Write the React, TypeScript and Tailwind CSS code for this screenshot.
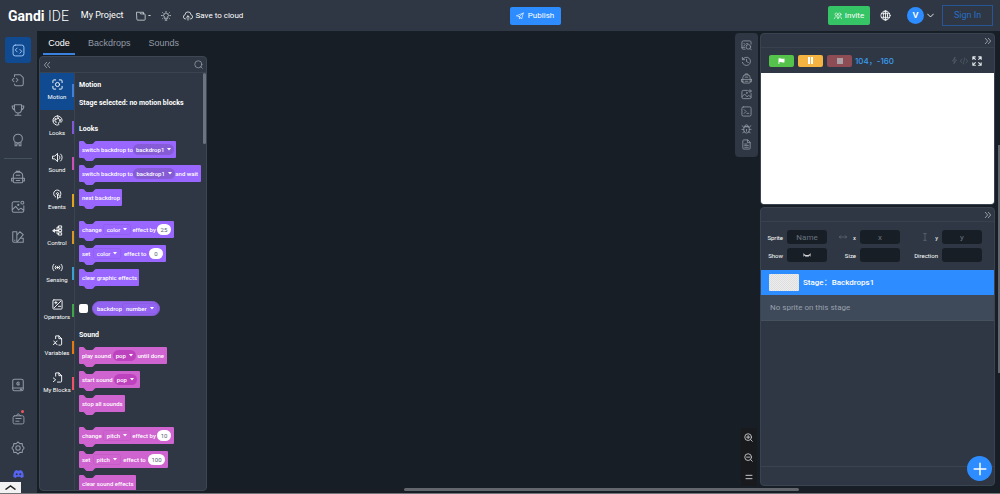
import type { ReactNode } from "react";

type IconProps = { children: ReactNode; className?: string; box?: string; width?: number };

function Icon({ children, className = "size-[14px]", box = "0 0 24 24", width = 1.8 }: IconProps) {
  return (
    <svg viewBox={box} className={"shrink-0 " + className} fill="none" stroke="currentColor" strokeWidth={width} strokeLinecap="round" strokeLinejoin="round" aria-hidden="true">
      {children}
    </svg>
  );
}

const codeFrame = (<><rect x="2" y="2" width="20" height="20" rx="4" /><path d="M9.500 7.500 6 11l3.500 3.500M14.500 10 18 13.500 14.500 17" /></>);
const fileCode = (<><path d="M6 6V3h10l5 5v11a3 3 0 0 1-3 3H9a3 3 0 0 1-3-3" /><path d="M5 9 2 12l3 3M9 9l3 3-3 3" /></>);
const trophy = (<><path d="M6 3h12v8a6 6 0 0 1-12 0zM6 5H2c0 4 1 6 4.500 7M18 5h4c0 4-1 6-4.500 7M12 17v4M7 21h10" /></>);
const medal = (<><circle cx="12" cy="9.500" r="7.500" /><path d="M7 16v6h3v-3.500h4V22h3v-6" /></>);
const backpack = (<><path d="M4 20V10a6 6 0 0 1 6-6h4a6 6 0 0 1 6 6v10a2 2 0 0 1-2 2H6a2 2 0 0 1-2-2zM9 4V2h6v2M1 14h22M1 14v5h3M23 14v5h-3M9 9h6M9 18h6" /></>);
const picture = (<><path d="M14 3H5a3 3 0 0 0-3 3v12a3 3 0 0 0 3 3h14a3 3 0 0 0 3-3v-8M2 17l6-6 5 6 4-3 5 4" /><circle cx="19.500" cy="4.500" r="2.500" /><circle cx="12.500" cy="8.500" r="1" /></>);
const swatches = (<><path d="M3 3h7v18H5a2 2 0 0 1-2-2zM10 9l5-6 6 5L10 21h11v-7h-5" /><path d="M6.500 17v1" /></>);
const keyBook = (<><rect x="3" y="2" width="18" height="20" rx="3" /><path d="M3 17h18M14 7.500a2.500 2.500 0 1 0 0 4V10h-1.500M16 19.500h2" /></>);
const notice = (<><rect x="2" y="7" width="20" height="15" rx="3" /><path d="m8 7 3-4 5 4M7 12h10M7 17h6" /></>);
const gear = (<><path d="m12 1.500 3 3 4.300-.3.300 4.300 3 3.500-3 3.500-.3 4.300-4.300-.3-3 3-3-3-4.300.3-.3-4.300-3-3.500 3-3.500.3-4.300 4.300.3z" /><circle cx="12" cy="12" r="3.800" /></>);
const history = (<><path d="M4 7a9 9 0 1 1-1 7M3 3v5h5M12 7v5l4 2" /></>);
const bug = (<><path d="M6 12a4 4 0 0 1 4-4h4a4 4 0 0 1 4 4v4a6 6 0 0 1-12 0zM8 8a4 4 0 0 1 8 0M8 8h8M2 14h4M18 14h4M3 6l3 4M21 6l-3 4M4 21l3-2M20 21l-3-2M12 14v4" /></>);
const terminal = (<><rect x="2" y="2" width="20" height="20" rx="3" /><path d="m7 8 4 4-4 4M13 16h4" /></>);
const doc = (<><path d="M14 2H6a2 2 0 0 0-2 2v16a2 2 0 0 0 2 2h12a2 2 0 0 0 2-2V8zM14 2v6h6M8 11h5M8 14h8M8 18h8" /></>);
const replay = (<><path d="M9 20H5a3 3 0 0 1-3-3V5a3 3 0 0 1 3-3h14a3 3 0 0 1 3 3v4M2 16h6M6 7l3 3-3 3M12 8h3" /><circle cx="16" cy="15" r="5" /><path d="m19.500 18.500 3 3" /></>);
const motion = (<><circle cx="12" cy="12" r="4.500" /><path d="M2 8V4a2 2 0 0 1 2-2h4M16 2h4a2 2 0 0 1 2 2v4M22 16v4a2 2 0 0 1-2 2h-4M8 22H4a2 2 0 0 1-2-2v-4" /></>);
const palette = (<><path d="M12 2a10 10 0 1 0 2 19.800c1-.3 1-1.300.5-2.300-1-2 0-4.500 3-4.500h3c1 0 1.500-1.500 1.500-3A10 10 0 0 0 12 2zM3 13c4-2 7 1 6 4" /><circle cx="7.500" cy="9" r="1.500" /><circle cx="13" cy="7" r="1.500" /><circle cx="17" cy="11" r="1.200" /></>);
const speaker = (<><path d="M2 9h4l6-6v18l-6-6H2zM15.500 8a5 5 0 0 1 0 8M19 4.500a10 10 0 0 1 0 15" /></>);
const events = (<><path d="M8 17.500A8 8 0 1 1 18 15M12 20v-9l7 7h-4l-3 4" /><path d="M9 11a3 3 0 0 1 6 0" /></>);
const control = (<><rect x="15" y="2" width="6" height="5" /><rect x="15" y="9.500" width="6" height="5" /><rect x="15" y="17" width="6" height="5" /><path d="M15 4.500h-4v15h4M15 12H7" /><path d="M2 12l4-3v6z" fill="currentColor" /></>);
const sensing = (<><circle cx="12" cy="12" r="1.800" fill="currentColor" /><path d="M8 8.500a5 5 0 0 0 0 7M16 8.500a5 5 0 0 1 0 7M4 5a10 10 0 0 0 0 14M20 5a10 10 0 0 1 0 14" /></>);
const operators = (<><rect x="2" y="2" width="20" height="20" rx="2" /><path d="M19 5 5 19M6 8h5M8.500 5.500v5M14 16h5" /></>);
const variables = (<><path d="M8 8V2h7l6 6v12a2 2 0 0 1-2 2h-4M15 2v6h6M4 13c3 0 3 8 7 8M11 13c-4 0-4 8-8 8" /></>);
const blocks = (<><path d="M8 9V2h7l6 6v12a2 2 0 0 1-2 2h-7M15 2v6h6M3 13l5 4-5 4" /></>);

const categories = [
  { name: "Motion", icon: motion, bar: "bg-[#4280d8]" },
  { name: "Looks", icon: palette, bar: "bg-[#8058d8]" },
  { name: "Sound", icon: speaker, bar: "bg-[#cf4fb8]" },
  { name: "Events", icon: events, bar: "bg-[#e0a51c]" },
  { name: "Control", icon: control, bar: "bg-[#dc9722]" },
  { name: "Sensing", icon: sensing, bar: "bg-[#3aa0d0]" },
  { name: "Operators", icon: operators, bar: "bg-[#3fa648]" },
  { name: "Variables", icon: variables, bar: "bg-[#e5790f]" },
  { name: "My Blocks", icon: blocks, bar: "bg-[#f0526a]" },
];

type Part = string | { menu: string; oval?: boolean } | { value: string };
type Tone = "looks" | "sound";
const tones = {
  looks: { fill: "bg-[#9966ff]", text: "text-[#9966ff]", deep: "bg-[#855cd6]" },
  sound: { fill: "bg-[#cf63cf]", text: "text-[#cf63cf]", deep: "bg-[#bd42bd]" },
};

function Parts({ parts, tone }: { parts: Part[]; tone: Tone }) {
  return (
    <>
      {parts.map((part, i) => {
        if (typeof part === "string") return <span key={i}>{part}</span>;
        if ("value" in part)
          return (
            <input key={i} aria-label="Value" defaultValue={part.value} className={"h-[11px] rounded-full bg-white text-center font-normal text-[#575e75] " + (part.value.length > 2 ? "w-[17px]" : "w-[14px]")} />
          );
        return (
          <button key={i} type="button" className={"flex h-[11px] items-center gap-[3px] " + (part.oval ? "rounded-full px-[3px] " + tones[tone].deep : "rounded-[2px] border border-black/5 px-[3px]")}>
            {part.menu}
            <svg viewBox="0 0 8 5" className="w-1" fill="currentColor" aria-hidden="true"><path d="M0 0h8L4 5z" /></svg>
          </button>
        );
      })}
    </>
  );
}

function Block({ parts, tone, width }: { parts: Part[]; tone: Tone; width: string }) {
  const t = tones[tone];
  return (
    <div className={"relative mb-[7px] flex h-[17px] items-center justify-between whitespace-nowrap rounded-[1px] px-[3px] " + t.fill + " " + width}>
      <svg viewBox="0 0 14 3" className="absolute left-1 top-0 h-[3px] w-[14px] text-[#2e3743]" fill="currentColor" aria-hidden="true"><path d="M0 0C2 0 2 3 4 3h5c2 0 2-3 4-3z" /></svg>
      <svg viewBox="0 0 14 3" className={"absolute left-1 top-full h-[3px] w-[14px] " + t.text} fill="currentColor" aria-hidden="true"><path d="M0 0C2 0 2 3 4 3h5c2 0 2-3 4-3z" /></svg>
      <Parts parts={parts} tone={tone} />
    </div>
  );
}

function SideButton({ label, children }: { label: string; children: ReactNode }) {
  return (
    <button type="button" aria-label={label} className="relative flex h-[30px] w-full shrink-0 items-center justify-center text-[#8f98a5]">
      {children}
    </button>
  );
}

function Chevrons({ flip }: { flip?: boolean }) {
  return <Icon className={"size-[8px]" + (flip ? " rotate-180" : "")} width={2.4}><path d="m4 4 7 8-7 8M13 4l7 8-7 8" /></Icon>;
}

function Header() {
  return (
    <header className="grid h-[31px] shrink-0 grid-cols-[1fr_auto_1fr] items-center bg-[#2e3743] text-[9px] text-white">
      <div className="flex items-center whitespace-nowrap">
        <a href="#home" className="ml-2 font-[Roboto] text-[14px] leading-4"><b>Gandi</b> <span className="font-light">IDE</span></a>
        <span className="ml-3 font-[Roboto]">My Project</span>
        <button type="button" aria-label="File" className="ml-3 flex items-center gap-[2px] text-[#cdd2d8]">
          <Icon className="size-[10px]" width={2}><path d="M2 3h7l2 4h9a2 2 0 0 1 2 2v11a2 2 0 0 1-2 2H4a2 2 0 0 1-2-2zM11 3h7v4" /></Icon>
          <svg viewBox="0 0 8 5" className="w-[3px]" fill="currentColor" aria-hidden="true"><path d="M0 0h8L4 5z" /></svg>
        </button>
        <button type="button" aria-label="Tips" className="ml-[10px] text-[#cdd2d8]">
          <Icon className="size-[10px]" width={2}><path d="M9 18v-3a5.500 5.500 0 1 1 6 0v3zM10 22h4M12 1v1M3 11H1M23 11h-2M4 4l1 1M20 4l-1 1M4 18l1-1M20 18l-1-1" /></Icon>
        </button>
        <button type="button" className="ml-3 flex items-center gap-[3px]">
          <Icon className="size-[10px]"><path d="M7 19H6a5 5 0 0 1-1-9.900 7 7 0 0 1 14 0A5 5 0 0 1 18 19h-1M12 22V12M8.500 15l3.500-3.500 3.500 3.500" /></Icon>
          <span className="font-[Roboto] text-[8px]">Save to cloud</span>
        </button>
      </div>
      <button type="button" className="ml-[70px] flex h-[18px] w-[51px] items-center justify-center gap-1 rounded-[2px] bg-[#2d8cff] font-[Roboto] text-[8px]">
        <Icon className="size-2"><path d="M2 11 22 3l-5 18-7-7zM10 14v7l3-4M10 14 22 3" /></Icon>Publish
      </button>
      <div className="flex items-center justify-end">
        <button type="button" className="flex h-[19px] w-[42px] items-center justify-center gap-[3px] rounded-[2px] bg-[#36c566] font-[Roboto] text-[8px]">
          <Icon className="size-2"><circle cx="7" cy="7" r="4" /><circle cx="17" cy="7" r="4" /><path d="M1 20c0-8 11-8 11 0M12 20c0-8 11-8 11 0M9 11l6 6" /></Icon>Invite
        </button>
        <button type="button" aria-label="Language" className="ml-[10px]"><Icon className="size-[11px]"><circle cx="12" cy="12" r="10" /><ellipse cx="12" cy="12" rx="4.500" ry="10" /><path d="M3 8h18M3 16h18M12 2v20" /></Icon></button>
        <button type="button" aria-label="Account" className="ml-4 flex items-center gap-[3px]">
          <span className="flex size-[17px] items-center justify-center rounded-full bg-[#2d8cff] font-bold">V</span>
          <Icon className="size-[7px]" width={3}><path d="m2 7 10 10L22 7" /></Icon>
        </button>
        <button type="button" className="ml-2 mr-[7px] h-[21px] w-[51px] border border-[#285694] font-[Roboto] text-[#2a6fc4]">Sign In</button>
      </div>
    </header>
  );
}

function Sidebar() {
  return (
    <nav aria-label="Tools" className="flex w-[37px] shrink-0 flex-col items-center bg-[#2e3743] pr-px">
      <button type="button" aria-label="Code editor" className="mb-[2px] mt-[6px] flex size-[26px] shrink-0 items-center justify-center rounded-[3px] bg-[#104b92] text-[#9cc4f5]"><Icon className="size-[13px]">{codeFrame}</Icon></button>
      <SideButton label="Files"><Icon>{fileCode}</Icon></SideButton>
      <SideButton label="Trophies"><Icon>{trophy}</Icon></SideButton>
      <SideButton label="Medals"><Icon>{medal}</Icon></SideButton>
      <hr className="my-[3px] w-7 border-[#465160]" />
      <SideButton label="Backpack"><Icon>{backpack}</Icon></SideButton>
      <SideButton label="Pictures"><Icon>{picture}</Icon></SideButton>
      <SideButton label="Themes"><Icon>{swatches}</Icon></SideButton>
      <div className="flex-1" />
      <SideButton label="Guide"><Icon>{keyBook}</Icon></SideButton>
      <div className="h-[3px]" />
      <SideButton label="News"><Icon className="size-[13px]">{notice}</Icon><span className="absolute right-3 top-[7px] size-[3px] rounded-full bg-[#f4555d]" /></SideButton>
      <SideButton label="Settings"><Icon>{gear}</Icon></SideButton>
      <button type="button" aria-label="Discord" className="mb-4 mt-[7px] shrink-0 text-[#5865f2]">
        <svg viewBox="0 0 24 18" className="h-2 w-[11px]" fill="currentColor" aria-hidden="true"><path fillRule="evenodd" d="M20 1.500 15 0l-1 1.500h-4L9 0 4 1.500C1 6 0 11 .5 15.500L6 18l2-3h8l2 3 5.500-2.500C24 11 23 6 20 1.500zM8 12a2.300 2.300 0 1 1 0-4.600A2.300 2.300 0 0 1 8 12zm8 0a2.300 2.300 0 1 1 0-4.600 2.300 2.300 0 0 1 0 4.600z" /></svg>
      </button>
    </nav>
  );
}

function Flyout() {
  return (
    <div className="relative min-w-0 flex-1 overflow-hidden border-l border-[#3a4451] pl-1 font-[Roboto] text-[7px] font-bold leading-none text-white">
      <h2 className="mt-2 text-[7px] leading-[8px]">Motion</h2>
      <p className="mt-[10px] leading-[8px]">Stage selected: no motion blocks</p>
      <h2 className="mb-2 mt-[18px] text-[7px] leading-[8px]">Looks</h2>
      <div className="text-[6px] font-medium">
        <Block tone="looks" width="w-[97px]" parts={["switch backdrop to", { menu: "backdrop1", oval: true }]} />
        <Block tone="looks" width="w-[122px]" parts={["switch backdrop to", { menu: "backdrop1", oval: true }, "and wait"]} />
        <Block tone="looks" width="w-[43px]" parts={["next backdrop"]} />
        <div className="h-2" />
        <Block tone="looks" width="w-[95px]" parts={["change", { menu: "color" }, "effect by", { value: "25" }]} />
        <Block tone="looks" width="w-[87px]" parts={["set", { menu: "color" }, "effect to", { value: "0" }]} />
        <Block tone="looks" width="w-[60px]" parts={["clear graphic effects"]} />
        <div className="flex items-center pt-2">
          <input type="checkbox" aria-label="Show backdrop" className="size-[9px] appearance-none rounded-[2px] bg-white" />
          <div className="ml-1 flex h-[15px] w-[68px] items-center justify-between rounded-full border border-[#855cd6] bg-[#9263f0] px-1"><Parts tone="looks" parts={["backdrop", { menu: "number" }]} /></div>
        </div>
      </div>
      <h2 className="mb-2 mt-[15px] text-[7px] leading-[8px]">Sound</h2>
      <div className="text-[6px] font-medium">
        <Block tone="sound" width="w-[88px]" parts={["play sound", { menu: "pop", oval: true }, "until done"]} />
        <Block tone="sound" width="w-[61px]" parts={["start sound", { menu: "pop", oval: true }]} />
        <Block tone="sound" width="w-[46px]" parts={["stop all sounds"]} />
        <div className="h-2" />
        <Block tone="sound" width="w-[95px]" parts={["change", { menu: "pitch" }, "effect by", { value: "10" }]} />
        <Block tone="sound" width="w-[89px]" parts={["set", { menu: "pitch" }, "effect to", { value: "100" }]} />
        <Block tone="sound" width="w-[57px]" parts={["clear sound effects"]} />
      </div>
      <span className="absolute right-0 top-0 h-[71px] w-[3px] rounded-full bg-[#6b7480]" />
    </div>
  );
}

function Palette() {
  return (
    <section className="flex w-[170px] shrink-0 flex-col pb-[3px]">
      <div role="tablist" className="flex h-6 shrink-0 pl-[6px] text-[9px] text-[#929aa6]">
        <button role="tab" aria-selected="true" className="w-8 border-b-2 border-[#3b82e0] pt-[3px] text-white">Code</button>
        <button role="tab" aria-selected="false" className="ml-[13px] border-b-2 border-transparent pt-[3px]">Backdrops</button>
        <button role="tab" aria-selected="false" className="ml-[18px] border-b-2 border-transparent pt-[3px]">Sounds</button>
      </div>
      <div className="ml-[2px] mt-px flex min-h-0 flex-1 flex-col overflow-hidden rounded-[4px] border border-[#3d4753] bg-[#2e3743]">
        <div className="flex h-4 shrink-0 items-center justify-between border-b border-[#3a4451] px-[3px] text-[#a3abb5]">
          <button type="button" aria-label="Collapse palette"><Chevrons flip /></button>
          <button type="button" aria-label="Search blocks"><Icon className="size-[9px]"><circle cx="11.500" cy="11.500" r="9.500" /><path d="m18 18 4 4" /></Icon></button>
        </div>
        <div className="flex min-h-0 flex-1">
          <div className="grid h-[330px] w-[34px] shrink-0 grid-rows-9 text-[6px] text-white">
            {categories.map((c, i) => (
              <button key={c.name} type="button" className={"relative flex flex-col items-center justify-center gap-[3px] pb-[3px] font-[Roboto] leading-[8px] " + (i === 0 ? "bg-[#104b92]" : "")}>
                <Icon className="size-[11px]" width={2}>{c.icon}</Icon>
                <span className="whitespace-nowrap">{c.name}</span>
                <span className={"absolute right-0 top-[11px] h-[13px] w-[2px] " + c.bar} />
              </button>
            ))}
          </div>
          <Flyout />
        </div>
      </div>
    </section>
  );
}

const workspaceTools = [
  { label: "Inspect", icon: replay }, { label: "History", icon: history }, { label: "Backpack", icon: backpack },
  { label: "Pictures", icon: picture }, { label: "Terminal", icon: terminal }, { label: "Debug", icon: bug }, { label: "Document", icon: doc },
];

function ToolColumn() {
  return (
    <aside className="flex w-[23px] shrink-0 flex-col items-center justify-between pb-2 pt-[2px]">
      <div className="flex h-[124px] w-full flex-col items-center justify-around rounded-[4px] bg-[#2e3743] py-1 text-[#929aa5]">
        {workspaceTools.map((t) => <button key={t.label} type="button" aria-label={t.label}><Icon className="size-[11px]">{t.icon}</Icon></button>)}
      </div>
      <div className="ml-1 flex h-[58px] w-4 flex-col items-center justify-around bg-[#191a1d] text-[#c3c6c9]">
        <button type="button" aria-label="Zoom in"><Icon className="size-[9px]" width={2.5}><circle cx="11" cy="11" r="9" /><path d="M7 11h8M11 7v8M18 18l4 4" /></Icon></button>
        <button type="button" aria-label="Zoom out"><Icon className="size-[9px]" width={2.5}><circle cx="11" cy="11" r="9" /><path d="M7 11h8M18 18l4 4" /></Icon></button>
        <button type="button" aria-label="Reset zoom"><Icon className="size-2" width={3}><path d="M3 7h18M3 17h18" /></Icon></button>
      </div>
    </aside>
  );
}

function PanelBar({ label }: { label: string }) {
  return (
    <div className="flex h-[14px] shrink-0 items-center justify-end border-b border-[#38424e] px-[2px] text-[#aeb5be]">
      <button type="button" aria-label={label}><Chevrons /></button>
    </div>
  );
}

function Stage() {
  return (
    <section className="flex h-[172px] shrink-0 flex-col overflow-hidden rounded-[4px] border border-[#3a4451] bg-[#2e3743]">
      <PanelBar label="Collapse stage" />
      <div className="flex h-[25px] shrink-0 items-center pl-2 pr-3">
        <button type="button" aria-label="Start" className="flex h-3 w-[25px] items-center justify-center rounded-[2px] bg-[#55c24b] text-white"><svg viewBox="0 0 16 14" className="h-[6px] w-[7px]" fill="currentColor" aria-hidden="true"><path d="M1 1c4-2 6 2 14 0v9c-6 2-8-2-12 0v4H1z" /></svg></button>
        <button type="button" aria-label="Pause" className="ml-1 flex h-3 w-[25px] items-center justify-center rounded-[2px] bg-[#f5b341] text-white"><svg viewBox="0 0 14 14" className="size-[7px]" fill="currentColor" aria-hidden="true"><path d="M2 0h4v14H2zM8 0h4v14H8z" /></svg></button>
        <button type="button" aria-label="Stop" className="ml-1 flex h-3 w-[25px] items-center justify-center rounded-[2px] bg-[#8e4c54]"><span className="size-[6px] bg-[#aaa0a6]" /></button>
        <span className="ml-[3px] font-['Inter','Noto_Sans_CJK_SC',sans-serif] text-[8px] font-medium text-[#3a9df0]">104，-160</span>
        <div className="ml-auto flex items-center text-[#56606c]">
          <Icon className="size-[7px]" width={2.5}><path d="M14 1 5 14h7l-2 9 9-13h-7z" /></Icon>
          <Icon className="ml-[2px] size-2" width={2}><path d="m6 6-5 6 5 6M18 6l5 6-5 6M14 3l-4 18" /></Icon>
          <button type="button" aria-label="Full screen" className="ml-1 text-[#e2e6ea]"><Icon className="size-[10px]" width={2.6}><path d="M2 8V2h6M2 2l6 6M16 2h6v6M22 2l-6 6M22 16v6h-6M22 22l-6-6M8 22H2v-6M2 22l6-6" /></Icon></button>
        </div>
      </div>
      <div className="min-h-0 flex-1 bg-white" />
    </section>
  );
}

const field = "h-[14px] w-10 rounded-[3px] bg-[#181e26] text-center text-[8px] text-white placeholder:text-[#69727e]";
const fieldLabel = "flex items-center justify-end gap-1 pr-1";

function Sprites() {
  return (
    <section className="relative mt-[2px] flex min-h-0 flex-1 flex-col rounded-[4px] border border-[#3a4451] bg-[#2e3743]">
      <PanelBar label="Collapse sprites" />
      <div className="grid grid-cols-[26px_40px_33px_40px_42px_40px] gap-y-1 pb-2 pt-2 font-[Roboto] text-[6px] text-white">
        <label htmlFor="name" className={fieldLabel}>Sprite</label>
        <input id="name" placeholder="Name" className={field} />
        <label htmlFor="px" className={fieldLabel}><Icon className="mr-[2px] size-2 text-[#6b7480]"><path d="M1 12h22M5 8l-4 4 4 4M19 8l4 4-4 4" /></Icon>x</label>
        <input id="px" placeholder="x" className={field} />
        <label htmlFor="py" className={fieldLabel}><Icon className="mr-[2px] size-2 text-[#6b7480]"><path d="M12 2v20M8 2h8M8 22h8" /></Icon>y</label>
        <input id="py" placeholder="y" className={field} />
        <label htmlFor="show" className={fieldLabel}>Show</label>
        <button id="show" type="button" aria-label="Show sprite" className="flex h-[14px] w-10 items-center justify-center rounded-[3px] bg-[#181e26]"><Icon className="size-2" width={2.5}><path d="M1 9c6 7 16 7 22 0M4 12l-2 3M9 14v3M15 14v3M20 12l2 3" /></Icon></button>
        <label htmlFor="size" className={fieldLabel}>Size</label>
        <input id="size" className={field} />
        <label htmlFor="dir" className={fieldLabel}>Direction</label>
        <input id="dir" className={field} />
      </div>
      <button type="button" className="flex h-[25px] shrink-0 items-center gap-1 bg-[#2d8cff] pl-2 font-['Roboto','Noto_Sans_CJK_SC',sans-serif] text-[8px] font-medium text-white">
        <span className="h-[17px] w-[30px] rounded-[1px] bg-[#e8e8e8] bg-[repeating-conic-gradient(#dedede_0_25%,#ededed_0_50%)] bg-[size:2px_2px]" />
        Stage：Backdrops1
      </button>
      <p className="flex h-[26px] shrink-0 items-center border-b border-[#465160] bg-[#3e4959] pl-[9px] text-[8px] text-[#98a1ad] font-[Roboto]">No sprite on this stage</p>
      <div className="flex-1" />
      <div className="h-[19px] border-t border-[#3a4451]" />
      <button type="button" aria-label="Add sprite" className="absolute bottom-1 right-[2px] flex size-[25px] items-center justify-center rounded-full bg-[#2d8cff] text-white"><Icon className="size-[14px]" width={2.5}><path d="M12 2v20M2 12h20" /></Icon></button>
    </section>
  );
}

export default function App() {
  return (
    <div className="relative flex h-screen flex-col overflow-hidden bg-[#181e26] font-['Liberation_Sans','Noto_Sans_CJK_SC',sans-serif]">
      <Header />
      <div className="flex min-h-0 flex-1">
        <Sidebar />
        <Palette />
        <main className="min-w-0 flex-1" aria-label="Workspace" />
        <ToolColumn />
        <div className="ml-[2px] mr-[5px] flex w-[235px] shrink-0 flex-col pb-2 pt-[2px]">
          <Stage />
          <Sprites />
        </div>
      </div>
      <button type="button" aria-label="Expand" className="absolute bottom-px left-0 flex h-[11px] w-[21px] items-center justify-center bg-[#f2f2f2] text-[#222]"><svg viewBox="0 0 22 10" className="h-[5px] w-[11px]" fill="none" stroke="currentColor" strokeWidth="3" aria-hidden="true"><path d="M1 9 11 2l10 7" /></svg></button>
      <div className="absolute bottom-[3px] left-[40.4%] h-[3px] w-[39.5%] rounded-full bg-[#62676e]" />
      <div className="absolute right-0 top-[145px] h-[228px] w-[2px] bg-[#62676e]" />
      <div className="absolute bottom-0 left-0 h-px w-full bg-[#6f7478]" />
    </div>
  );
}
